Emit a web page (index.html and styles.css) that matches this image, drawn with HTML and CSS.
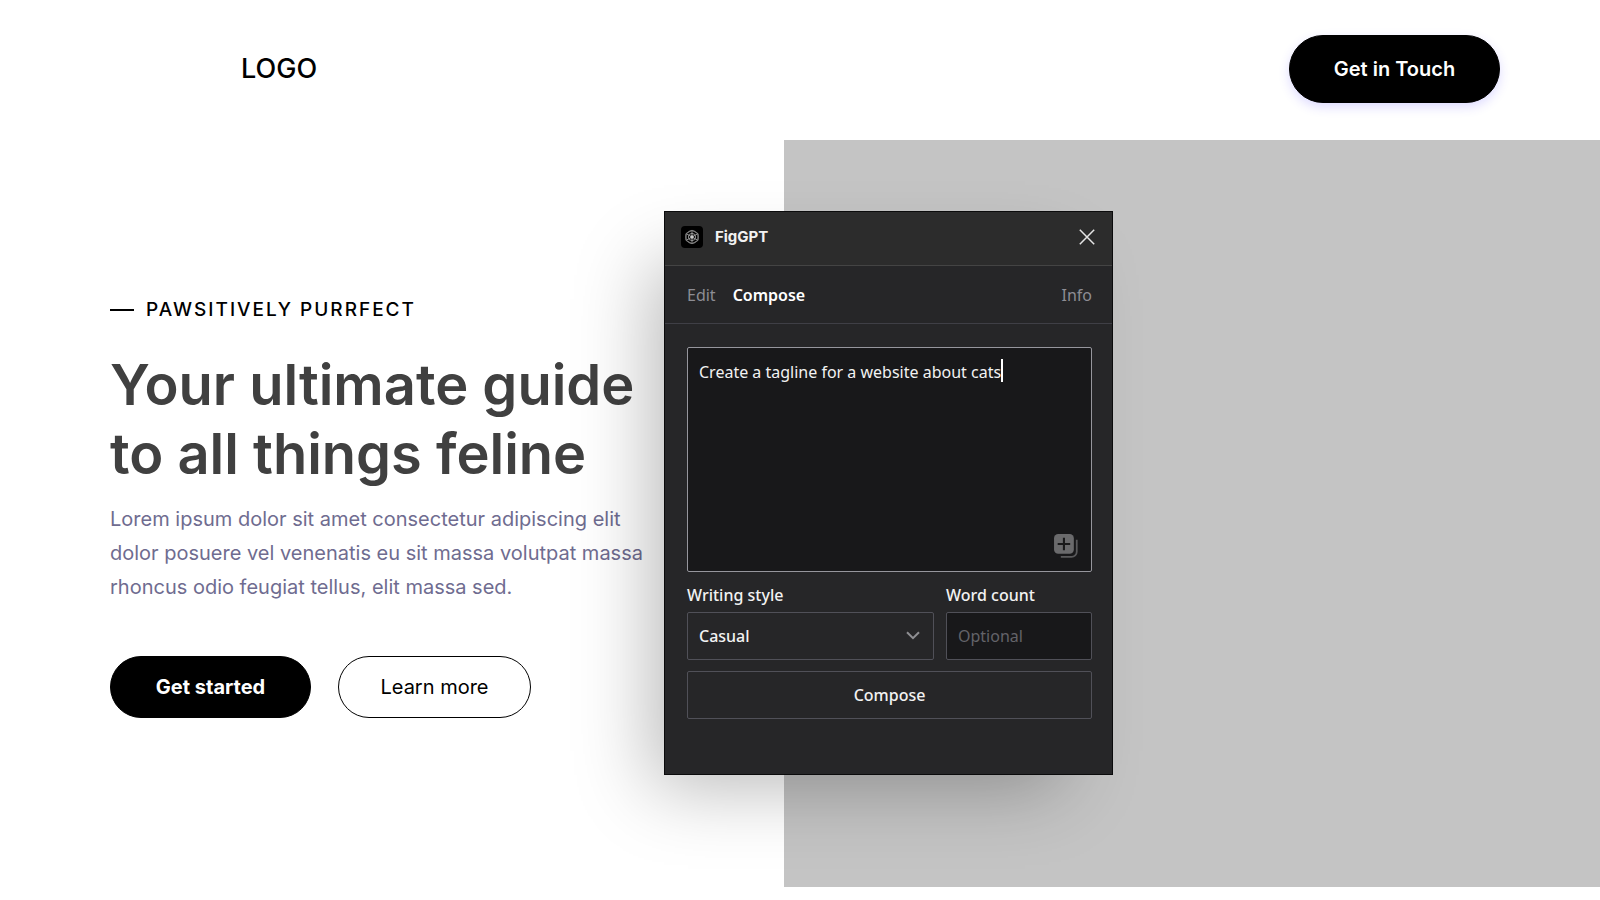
FILE: index.html
```html
<!DOCTYPE html>
<html lang="en">
<head>
<meta charset="utf-8">
<meta name="viewport" content="width=device-width, initial-scale=1">
<title>Pawsitively Purrfect</title>
<link rel="stylesheet" href="styles.css">
</head>
<body>
<header class="site-header">
  <a class="logo" href="#">LOGO</a>
  <button class="btn btn-contact" type="button">Get in Touch</button>
</header>
<main class="hero">
  <section class="hero-copy">
    <p class="eyebrow">PAWSITIVELY PURRFECT</p>
    <h1 class="headline">Your ultimate guide<br>to all things feline</h1>
    <p class="lead">Lorem ipsum dolor sit amet consectetur adipiscing elit<br>dolor posuere vel venenatis eu sit massa volutpat massa<br>rhoncus odio feugiat tellus, elit massa sed.</p>
    <div class="actions">
      <button class="btn btn-primary" type="button">Get started</button>
      <button class="btn btn-outline" type="button">Learn more</button>
    </div>
  </section>
  <div class="hero-media"></div>
  <section class="plugin" role="dialog" aria-labelledby="plugin-title">
    <div class="plugin-bar">
      <svg class="plugin-logo" viewBox="0 0 22 22" aria-hidden="true">
        <rect width="22" height="22" rx="4" fill="#000"/>
        <g fill="none" stroke="#a0a0a0" stroke-width="0.9">
          <path d="M11 4.2 17 7.6v6.8l-6 3.4-6-3.4V7.6z"/>
          <path d="M11 4.2v13.600M5 7.600l12 6.800M17 7.600 5 14.400"/>
          <circle cx="11" cy="11" r="3.600"/>
          <circle cx="11" cy="11" r="6.400" stroke="#777"/>
        </g>
        <circle cx="11" cy="11" r="1.700" fill="#ccc"/>
      </svg>
      <h2 class="plugin-title" id="plugin-title">FigGPT</h2>
      <button class="plugin-close" type="button" aria-label="Close">
        <svg viewBox="0 0 16 16"><path d="M.8.8l14.4 14.4M15.2.8.8 15.2" fill="none" stroke="#e4e4e4" stroke-width="1.5"/></svg>
      </button>
    </div>
    <nav class="tabs">
      <a class="tab" href="#">Edit</a>
      <a class="tab tab-active" href="#">Compose</a>
      <a class="tab tab-info" href="#">Info</a>
    </nav>
    <form class="form">
      <div class="prompt">
        <textarea class="prompt-input" aria-label="Prompt">Create a tagline for a website about cats</textarea>
        <span class="caret"></span>
        <button class="prompt-add" type="button" aria-label="Add prompt">
          <svg viewBox="0 0 24 24"><rect x="1" y="1" width="19" height="19" rx="4" fill="#6a6a6c"/><path d="M10.5 4.5v12M4.5 10.5h12" stroke="#19191a" stroke-width="2" fill="none"/><path d="M22.800 6.500v11.500a5 5 0 0 1-5 5H7.500" stroke="#59595b" stroke-width="1.700" fill="none"/></svg>
        </button>
      </div>
      <div class="options">
        <div class="field field-style">
          <label class="label" for="style">Writing style</label>
          <div class="select-wrap">
            <select class="control" id="style"><option>Casual</option></select>
            <svg class="chevron" viewBox="0 0 14 9" aria-hidden="true"><path d="M1 1.200l6 6 6-6" fill="none" stroke="#8e8e92" stroke-width="2"/></svg>
          </div>
        </div>
        <div class="field field-count">
          <label class="label" for="count">Word count</label>
          <input class="control control-dark" id="count" type="text" placeholder="Optional">
        </div>
      </div>
      <button class="submit" type="submit">Compose</button>
    </form>
  </section>
</main>
</body>
</html>
```
FILE: styles.css
```css
* { box-sizing: border-box; }

body {
  margin: 0;
  min-height: 100vh;
  padding-bottom: 13px;
  display: flex;
  flex-direction: column;
  background: #fff;
  color: #000;
  font-family: Inter, "Open Sans", sans-serif;
}

h1, h2, p { margin: 0; }
a { color: inherit; text-decoration: none; }
button, input, select, textarea { font: inherit; color: inherit; }
button { cursor: pointer; }
svg { display: block; }

.site-header {
  height: 140px;
  padding: 0 100px 2px 241px;
  display: flex;
  align-items: center;
  justify-content: space-between;
}

.logo { font-size: 27px; line-height: 32px; font-weight: 500; }

.btn {
  border: 1px solid #000;
  border-radius: 34px;
  background: #000;
  color: #fff;
  font-size: 20px;
  line-height: 24px;
  font-weight: 600;
  text-align: center;
}

.btn-contact {
  width: 211px;
  height: 68px;
  box-shadow: 0 4px 11px rgba(74, 58, 255, 0.18);
}

.btn-primary { width: 201px; height: 62px; font-weight: 700; }

.btn-outline {
  width: 193px;
  height: 62px;
  background: transparent;
  color: #000;
  font-weight: 400;
}

.hero {
  position: relative;
  flex: 1;
  display: grid;
  grid-template-columns: 49% 51%;
}

.hero-media { background: #c4c4c4; }
.hero-copy { padding: 158px 0 0 110px; white-space: nowrap; }

.eyebrow {
  display: flex;
  align-items: center;
  gap: 12px;
  font-size: 19px;
  line-height: 24px;
  font-weight: 500;
  letter-spacing: 2px;
}

.eyebrow::before { content: ""; width: 24px; height: 2px; background: #000; }

.headline {
  margin-top: 29px;
  color: #404040;
  font-size: 56px;
  line-height: 69px;
  font-weight: 600;
}

.lead { margin-top: 13px; color: #6f6c90; font-size: 20px; line-height: 34px; }
.actions { margin-top: 52px; display: flex; gap: 27px; }

.plugin {
  position: absolute;
  top: 71px;
  left: 41.5%;
  width: 449px;
  height: 564px;
  border: 1px solid #0b0b0c;
  background: #262628;
  color: #f2f2f2;
  font-family: "Noto Sans", "Open Sans", sans-serif;
  font-size: 16px;
  line-height: 24px;
  box-shadow: -32px 32px 72px -20px rgba(0, 0, 0, 0.28);
}

.plugin-bar {
  height: 54px;
  padding: 0 17px 4px 16px;
  display: flex;
  align-items: center;
  background: #2c2c2c;
  border-bottom: 1px solid #444;
}

.plugin-logo { width: 22px; height: 22px; margin-right: 12px; }
.plugin-title { font-family: Inter, sans-serif; font-size: 15px; line-height: 24px; font-weight: 700; }
.plugin-close { margin-left: auto; padding: 0; border: 0; background: none; }
.plugin-close svg { width: 16px; height: 16px; }

.tabs {
  height: 58px;
  padding: 0 20px 0 22px;
  display: flex;
  align-items: center;
  gap: 17px;
  border-bottom: 1px solid #3f3f46;
}

.tab { color: #8d8d94; }
.tab-active { color: #fff; font-weight: 600; }
.tab-info { margin-left: auto; }

.form { padding: 23px 20px 0 22px; display: flex; flex-direction: column; gap: 11px; }
.prompt { position: relative; }

.prompt-input {
  display: block;
  width: 100%;
  height: 225px;
  padding: 12px 11px;
  border: 1px solid #96969d;
  border-radius: 2px;
  outline: 0;
  background: #18181a;
  resize: none;
}

.caret { position: absolute; top: 12px; left: 314px; width: 2px; height: 23px; background: #fff; }

.prompt-add {
  position: absolute;
  right: 14px;
  bottom: 14px;
  padding: 0;
  border: 0;
  background: none;
}

.prompt-add svg { width: 25px; height: 25px; }
.options { display: flex; gap: 12px; }
.field-style { flex: 1; }
.field-count { width: 146px; }
.label { display: block; height: 29px; font-weight: 500; }
.select-wrap { position: relative; }

.control {
  display: block;
  width: 100%;
  height: 48px;
  padding: 0 11px;
  border: 1px solid #505058;
  border-radius: 2px;
  background: #262628;
  font-weight: 500;
  appearance: none;
}

.control-dark { background: #18181a; font-weight: 400; }
.control-dark::placeholder { color: #636369; opacity: 1; }
.chevron { position: absolute; top: 19px; right: 14px; width: 14px; height: 9px; pointer-events: none; }

.submit {
  height: 48px;
  border: 1px solid #505058;
  border-radius: 2px;
  background: #262628;
  font-weight: 500;
}
```
